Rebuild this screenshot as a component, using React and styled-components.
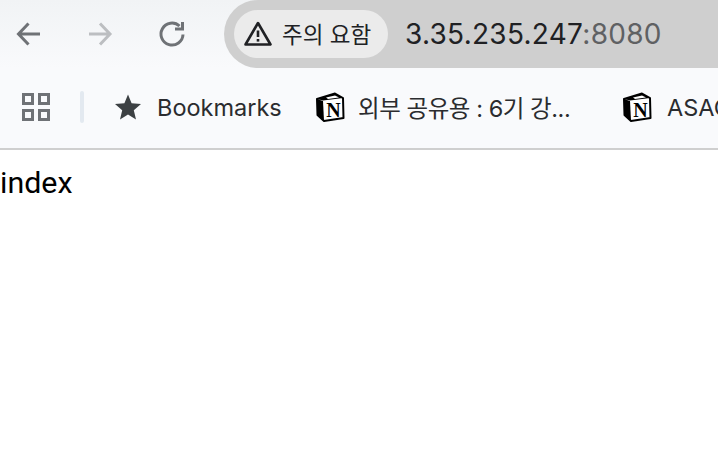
import styled, { createGlobalStyle } from "styled-components";

const GlobalStyle = createGlobalStyle`
  html, body {
    margin: 0;
    padding: 0;
    background: #ffffff;
    overflow: hidden;
  }
  body {
    font-family: "Inter", "Noto Sans CJK KR", sans-serif;
  }
`;

function NotionLogo() {
  return (
    <svg width="30" height="30" viewBox="0 0 30 30">
      <path
        d="M2 7 L20 1.5 L28 6 L28.5 26 L9 29 L2.5 23 Z"
        fill="#fff"
        stroke="#000"
        strokeWidth="2"
        strokeLinejoin="round"
      />
      <path d="M2 7 L20 1.5 L28 6 L8 8.5 Z" fill="#000" />
      <path d="M2 7 L8 9 L9 29 L2.5 23 Z" fill="#000" />
      <path d="M11 5.5 L20 3.5 L24 5.6 L13 7 Z" fill="#fff" />
      <text
        x="18.4"
        y="25"
        textAnchor="middle"
        fontFamily="Liberation Serif, serif"
        fontWeight="700"
        fontSize="20"
        fill="#000"
      >
        N
      </text>
    </svg>
  );
}

function App() {
  return (
    <>
      <GlobalStyle />
      <Toolbar>
        <NavButtons>
          <NavIcon width="30" height="30" viewBox="0 0 30 30" color="#6f7276">
            <path d="M26 15 H5 M14.5 4.5 L4.5 15 L14.5 25.5" />
          </NavIcon>
          <NavIcon width="30" height="30" viewBox="0 0 30 30" color="#bcbec1">
            <path d="M3 15 H24 M14 4.5 L24 15 L14 25.5" />
          </NavIcon>
          <NavIcon width="30" height="30" viewBox="0 0 30 30" color="#6f7276">
            <path d="M25 15.5 A11 11 0 1 1 21.5 7" />
            <path d="M24.5 3 V10 H17" />
          </NavIcon>
        </NavButtons>
        <AddressBar>
          <WarningChip>
            <svg width="30" height="30" viewBox="0 0 30 30">
              <path
                d="M15 4 L27.5 25.5 H2.5 Z"
                fill="none"
                stroke="#202124"
                strokeWidth="2.6"
                strokeLinejoin="round"
              />
              <path d="M15 11.5 V18" stroke="#202124" strokeWidth="2.6" />
              <path d="M15 20 V22.6" stroke="#202124" strokeWidth="2.6" />
            </svg>
            <ChipLabel>주의 요함</ChipLabel>
          </WarningChip>
          <Url>
            3.35.235.247<UrlPort>:8080</UrlPort>
          </Url>
        </AddressBar>
      </Toolbar>
      <BookmarkBar>
        <AppsIcon>
          <AppsCell />
          <AppsCell />
          <AppsCell />
          <AppsCell />
        </AppsIcon>
        <Divider />
        <Bookmark $width="201px" $gap="15px">
          <svg width="28" height="28" viewBox="0 0 28 28">
            <path
              d="M14 1.5 L17.6 10.2 L27 11 L19.8 17.2 L22 26.4 L14 21.5 L6 26.4 L8.2 17.2 L1 11 L10.4 10.2 Z"
              fill="#3c4043"
            />
          </svg>
          <BookmarkLabel>Bookmarks</BookmarkLabel>
        </Bookmark>
        <Bookmark $width="307px" $gap="13px">
          <NotionLogo />
          <BookmarkLabel $spacing="-0.45px">외부 공유용 : 6기 강...</BookmarkLabel>
        </Bookmark>
        <Bookmark $gap="15px">
          <NotionLogo />
          <BookmarkLabel>ASAC</BookmarkLabel>
        </Bookmark>
      </BookmarkBar>
      <Content>index</Content>
    </>
  );
}

const Toolbar = styled.div`
  display: flex;
  height: 68px;
  background: linear-gradient(#f1f3f5, #f9fafc);
  overflow: hidden;
`;

const NavButtons = styled.div`
  display: flex;
  align-items: center;
  gap: 42px;
  width: 224px;
  box-sizing: border-box;
  padding-left: 14px;
`;

const NavIcon = styled.svg`
  fill: none;
  stroke: ${(props) => props.color};
  stroke-width: 3;
`;

const AddressBar = styled.div`
  flex: 1;
  display: flex;
  align-items: center;
  gap: 17px;
  padding-left: 10px;
  background: #cfcfcf;
  border-radius: 34px 0 0 34px;
`;

const WarningChip = styled.div`
  display: flex;
  align-items: center;
  gap: 9px;
  width: 154px;
  height: 48px;
  box-sizing: border-box;
  padding-left: 9px;
  background: #ebebeb;
  border-radius: 24px;
`;

const ChipLabel = styled.span`
  font-size: 22.5px;
  color: #202124;
  white-space: nowrap;
  padding-bottom: 2px;
`;

const Url = styled.div`
  font-size: 28px;
  letter-spacing: 0.28px;
  color: #202124;
  white-space: nowrap;
`;

const UrlPort = styled.span`
  color: #5f6163;
`;

const BookmarkBar = styled.div`
  display: flex;
  align-items: center;
  height: 82px;
  padding: 0 0 2px 22px;
  box-sizing: border-box;
  background: #f9fafc;
  border-bottom: 2px solid #cfcfcf;
  overflow: hidden;
  white-space: nowrap;
`;

const AppsIcon = styled.div`
  display: grid;
  grid-template-columns: 12px 12px;
  gap: 4px;
  flex-shrink: 0;
`;

const AppsCell = styled.div`
  width: 12px;
  height: 12px;
  box-sizing: border-box;
  border: 3px solid #6f7276;
`;

const Divider = styled.div`
  flex-shrink: 0;
  width: 4px;
  height: 32px;
  margin: 0 30px 0 30px;
  background: #e3e9f0;
  border-radius: 2px;
`;

const Bookmark = styled.div`
  display: flex;
  align-items: center;
  flex-shrink: 0;
  gap: ${(props) => props.$gap};
  width: ${(props) => props.$width || "auto"};
`;

const BookmarkLabel = styled.span`
  font-size: 23.5px;
  letter-spacing: ${(props) => props.$spacing || "0"};
  color: #2b2c2f;
`;

const Content = styled.div`
  padding: 15px 0 0 0;
  font-family: "Roboto", sans-serif;
  font-size: 30.4px;
  line-height: 36px;
  color: #000;
`;

export default App;
